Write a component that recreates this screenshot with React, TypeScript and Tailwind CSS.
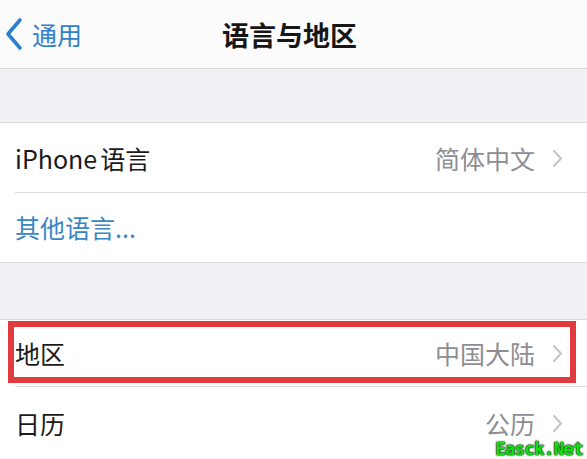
import React from 'react';

const font = "font-['Noto_Sans_CJK_SC','Noto_Sans',sans-serif]";

const Chevron: React.FC = () => (
  <svg width="11" height="19" viewBox="0 0 11 19" className="ml-[17px]">
    <path d="M2 2l7 7.5L2 17" fill="none" stroke="#c4c4c8" strokeWidth="2" strokeLinecap="round" strokeLinejoin="round" />
  </svg>
);

type RowProps = {
  label: React.ReactNode;
  value?: string;
  blue?: boolean;
  height: string;
  divider?: boolean;
};

const Row: React.FC<RowProps> = ({ label, value, blue, height, divider }) => (
  <div className={`relative flex items-center pl-[15px] pr-[24px] bg-white ${height}`}>
    <span className={`text-[25px] leading-none ${blue ? 'text-[#3a86c4]' : 'text-[#1a1a1a]'}`}>{label}</span>
    {value && (
      <div className="ml-auto flex items-center">
        <span className="text-[25px] leading-none text-[#8d8d92]">{value}</span>
        <Chevron />
      </div>
    )}
    {divider && <div className="absolute bottom-0 left-[15px] right-0 h-px bg-[#dcdce0]" />}
  </div>
);

export default function App() {
  return (
    <div className={`relative w-[587px] h-[459px] overflow-hidden bg-[#f0f0f5] ${font}`}>
      {/* nav bar */}
      <div className="relative flex h-[69px] items-center border-b border-[#d6d6da] bg-[#fbfbfb]">
        <div className="flex items-center pl-[5px] text-[#2f7fcc]">
          <svg width="18" height="34" viewBox="0 0 18 34">
            <path d="M15 3L3 17l12 14" fill="none" stroke="#2f7fcc" strokeWidth="3.6" strokeLinecap="round" strokeLinejoin="round" />
          </svg>
          <span className="ml-[9px] text-[25px] leading-none">通用</span>
        </div>
        <span className="absolute left-[222px] text-[27px] font-bold leading-none text-[#161616]">语言与地区</span>
      </div>

      <div className="h-[54px] border-b border-[#dadade]" />

      <Row label={<>iPhone<span className="ml-[3px]">语言</span></>} value="简体中文" height="h-[70px]" divider />
      <Row label="其他语言..." blue height="h-[69px]" />

      <div className="h-[58px] border-y border-[#dadade]" />

      <div className="relative">
        <Row label="地区" value="中国大陆" height="h-[67px]" divider />
        <div className="absolute left-[8px] top-[1px] h-[62px] w-[568px] border-[6px] border-[#e13b40]" />
      </div>
      <Row label="日历" value="公历" height="h-[72px]" />

      <span className="absolute bottom-[1px] right-[4px] font-['DejaVu_Sans_Mono',monospace] text-[17px] font-bold leading-none tracking-[-0.5px] text-[#11e011] [text-shadow:0_0_2px_#0a3a0a,0_0_2px_#0a3a0a,0_0_1px_#000]">
        Easck.Net
      </span>
    </div>
  );
}
